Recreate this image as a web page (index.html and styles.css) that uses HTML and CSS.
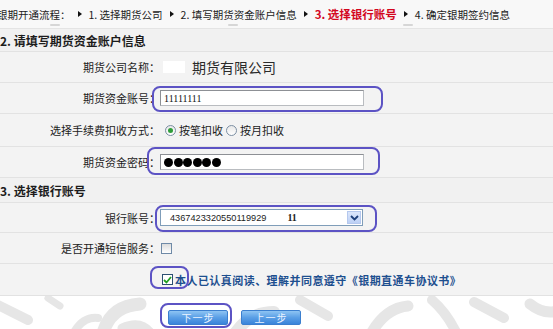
FILE: index.html
```html
<!DOCTYPE html>
<html lang="zh-CN">
<head>
<meta charset="utf-8">
<title>银期开通流程</title>
<link rel="stylesheet" href="styles.css">
</head>
<body>
<div class="page">
  <div class="steps">
    <span class="title">银期开通流程：</span>
    <span class="arrow"></span><span class="step">1. 选择期货公司</span>
    <span class="arrow"></span><span class="step">2. 填写期货资金账户信息</span>
    <span class="arrow"></span><span class="step current">3. 选择银行账号</span>
    <span class="arrow"></span><span class="step">4. 确定银期签约信息</span>
    <span class="speck s1"></span><span class="speck s2"></span><span class="speck s3"></span>
  </div>

  <div class="section">2. 请填写期货资金账户信息</div>

  <div class="row">
    <div class="label">期货公司名称：</div>
    <div class="value"><span class="mask"></span><span class="company">期货有限公司</span></div>
  </div>

  <div class="row">
    <div class="label">期货资金账号：</div>
    <div class="value"><span class="input acct">11111111</span></div>
    <span class="mark mark-acct"></span>
  </div>

  <div class="row tall">
    <div class="label">选择手续费扣收方式：</div>
    <div class="value">
      <span class="radio first checked"></span><span class="opt">按笔扣收</span>
      <span class="radio"></span><span class="opt">按月扣收</span>
    </div>
  </div>

  <div class="row">
    <div class="label">期货资金密码：</div>
    <div class="value"><span class="input pwd"><i></i><i></i><i></i><i></i><i></i><i></i></span></div>
    <span class="mark mark-pwd"></span>
  </div>

  <div class="section sec3">3. 选择银行账号</div>

  <div class="row short">
    <div class="label">银行账号：</div>
    <div class="value">
      <span class="select">
        <span class="acctno">4367423320550119929</span>
        <span class="suffix">11</span>
        <span class="drop"><svg width="9" height="6" viewBox="0 0 9 6"><path d="M1 1 L4.5 4.5 L8 1" fill="none" stroke="#1d3f7a" stroke-width="1.8"/></svg></span>
      </span>
    </div>
    <span class="mark mark-bank"></span>
  </div>

  <div class="row">
    <div class="label">是否开通短信服务：</div>
    <div class="value"><span class="check sms"></span></div>
  </div>

  <div class="row agree">
    <div class="label"></div>
    <div class="value">
      <span class="check checked"><svg width="9" height="8" viewBox="0 0 9 8"><path d="M1 4 L3.5 6.5 L8 1" fill="none" stroke="#21a021" stroke-width="1.8"/></svg></span>
      <span class="agree-text">本人已认真阅读、理解并同意遵守《银期直通车协议书》</span>
    </div>
    <span class="mark mark-check"></span>
  </div>

  <div class="footer">
    <svg class="watermark" width="553" height="33" viewBox="0 0 553 33">
      <g fill="none" stroke="#e6e6e6" stroke-linecap="round">
        <path d="M-4 8 L28 24" stroke-width="10"/>
        <path d="M48 2 L60 10" stroke-width="7"/>
        <path d="M72 40 Q82 20 98 22" stroke-width="8"/>
        <path d="M104 34 Q112 10 140 8" stroke-width="13"/>
        <path d="M122 32 Q140 24 150 36" stroke-width="9"/>
        <path d="M236 36 Q250 16 274 16" stroke-width="12"/>
        <path d="M300 4 L328 20" stroke-width="10"/>
        <path d="M372 36 Q386 12 408 10" stroke-width="11"/>
        <path d="M432 4 Q446 16 456 36" stroke-width="10"/>
        <path d="M474 6 L504 22" stroke-width="10"/>
        <path d="M530 8 Q545 20 560 14" stroke-width="11"/>
      </g>
    </svg>
    <span class="btn">下一步</span>
    <span class="btn">上一步</span>
    <span class="mark mark-next"></span>
  </div>
</div>
</body>
</html>
```

FILE: styles.css
```css
html, body {
  margin: 0;
  padding: 0;
}

body {
  width: 553px;
  height: 329px;
  overflow: hidden;
  background: #ffffff;
  font-family: "Noto Sans CJK SC", "Liberation Sans", sans-serif;
  font-size: 11px;
  color: #1c1c1c;
}

.page {
  width: 553px;
}

/* step header */
.steps {
  position: relative;
  height: 28px;
  display: flex;
  align-items: center;
  white-space: nowrap;
  font-size: 10.5px;
  background: #f8f8f8;
  border-bottom: 1px solid #e4e4e4;
}

.title {
  margin-left: -3px;
}

.arrow {
  width: 0;
  height: 0;
  border-left: 4px solid #111;
  border-top: 3.5px solid transparent;
  border-bottom: 3.5px solid transparent;
  margin: 0 7px 0 7px;
}

.step.current {
  color: #d3061e;
  font-weight: bold;
  font-size: 11.5px;
}

.speck {
  position: absolute;
  top: 24px;
  width: 10px;
  height: 2px;
  background: #d6d6d6;
  border-radius: 1px;
}
.s1 { left: 50px; }
.s2 { left: 228px; }
.s3 { left: 403px; }

/* section titles */
.section {
  height: 22px;
  display: flex;
  align-items: center;
  font-size: 12px;
  font-weight: bold;
  background: #f1f1f1;
  border-bottom: 1px solid #e2e2e2;
}

.section.sec3 {
  height: 24px;
}

/* form rows */
.row {
  position: relative;
  height: 30px;
  display: flex;
  align-items: center;
  background: #f3f3f3;
  border-bottom: 1px solid #e2e2e2;
}

.row.tall { height: 32px; }
.row.short { height: 29px; }
.row.agree { height: 31px; }

.label {
  flex: none;
  width: 160px;
  text-align: right;
  white-space: nowrap;
}

.value {
  display: flex;
  align-items: center;
  white-space: nowrap;
}

.mask {
  width: 22px;
  height: 12px;
  margin-left: 3px;
  background: #ffffff;
}

.company {
  margin-left: 7px;
  font-size: 14px;
  color: #2a2a2a;
}

.input {
  box-sizing: border-box;
  width: 204px;
  height: 16px;
  display: flex;
  align-items: center;
  padding-left: 3px;
  background: #ffffff;
  border: 1px solid #b9bcc0;
  border-top-color: #8d9095;
  border-left-color: #8d9095;
}

.acct {
  font-family: "Liberation Serif", serif;
  font-size: 10px;
  color: #111;
}

.pwd i {
  width: 9px;
  height: 9px;
  border-radius: 50%;
  background: #000;
  margin-right: 0.6px;
}

.radio {
  box-sizing: border-box;
  width: 11px;
  height: 11px;
  border-radius: 50%;
  border: 1px solid #7c8fa3;
  background: linear-gradient(#e8e8e8, #ffffff);
  margin: 0 3px 0 3px;
  display: flex;
  align-items: center;
  justify-content: center;
}

.radio.first {
  margin-left: 5px;
}

.radio.checked::after {
  content: "";
  width: 5px;
  height: 5px;
  border-radius: 50%;
  background: #2f9d3a;
}

.select {
  box-sizing: border-box;
  width: 203px;
  height: 17px;
  display: flex;
  align-items: center;
  background: #ffffff;
  border: 1px solid #7f9db9;
}

.acctno {
  margin-left: 9px;
  font-family: "Liberation Sans", sans-serif;
  font-size: 9.2px;
  color: #222;
}

.suffix {
  margin-left: 21px;
  font-family: "Liberation Serif", serif;
  font-size: 10px;
  font-weight: bold;
  color: #222;
}

.drop {
  margin-left: auto;
  margin-right: 1px;
  width: 14px;
  height: 13px;
  display: flex;
  align-items: center;
  justify-content: center;
  background: linear-gradient(#dbe6fb, #bcd0f5);
  border: 1px solid #b5c8ee;
  box-sizing: border-box;
}

.check {
  box-sizing: border-box;
  width: 11px;
  height: 11px;
  border: 1px solid #6f8aa7;
  background: linear-gradient(#dcdcdc, #ffffff);
  display: flex;
  align-items: center;
  justify-content: center;
}

.check.sms {
  margin-left: 1px;
}

.check.checked {
  margin-left: 2px;
  background: #ffffff;
  border-color: #2c4f72;
}

.agree-text {
  margin-left: 2px;
  font-size: 11px;
  font-weight: bold;
  letter-spacing: 0.45px;
  color: #1d4f8f;
}

/* annotation highlights */
.mark {
  position: absolute;
  box-sizing: border-box;
  border: 2px solid #5c53c4;
  border-radius: 8px;
  pointer-events: none;
}

.mark-acct { left: 152px; top: 3px; width: 231px; height: 26px; }
.mark-pwd { left: 147px; top: 0; width: 233px; height: 28px; }
.mark-bank { left: 155px; top: 2px; width: 222px; height: 27px; }
.mark-check { left: 150px; top: 2px; width: 39px; height: 23px; }
.mark-next { left: 160px; top: 7px; width: 72px; height: 25px; }

/* footer with buttons */
.footer {
  position: relative;
  height: 33px;
  display: flex;
  align-items: flex-start;
  padding-top: 14px;
  padding-left: 168px;
  gap: 13px;
  box-sizing: border-box;
  background: #ffffff;
  overflow: hidden;
}

.watermark {
  position: absolute;
  left: 0;
  top: 0;
}

.btn {
  position: relative;
  box-sizing: border-box;
  width: 60px;
  height: 15px;
  display: flex;
  align-items: center;
  justify-content: center;
  border: 1px solid #3b7fcf;
  border-radius: 2px;
  background: linear-gradient(#8ec4f3, #5a9fe6 50%, #3a84da);
  color: #eaf3ff;
  font-size: 10px;
  letter-spacing: 1px;
}
```
